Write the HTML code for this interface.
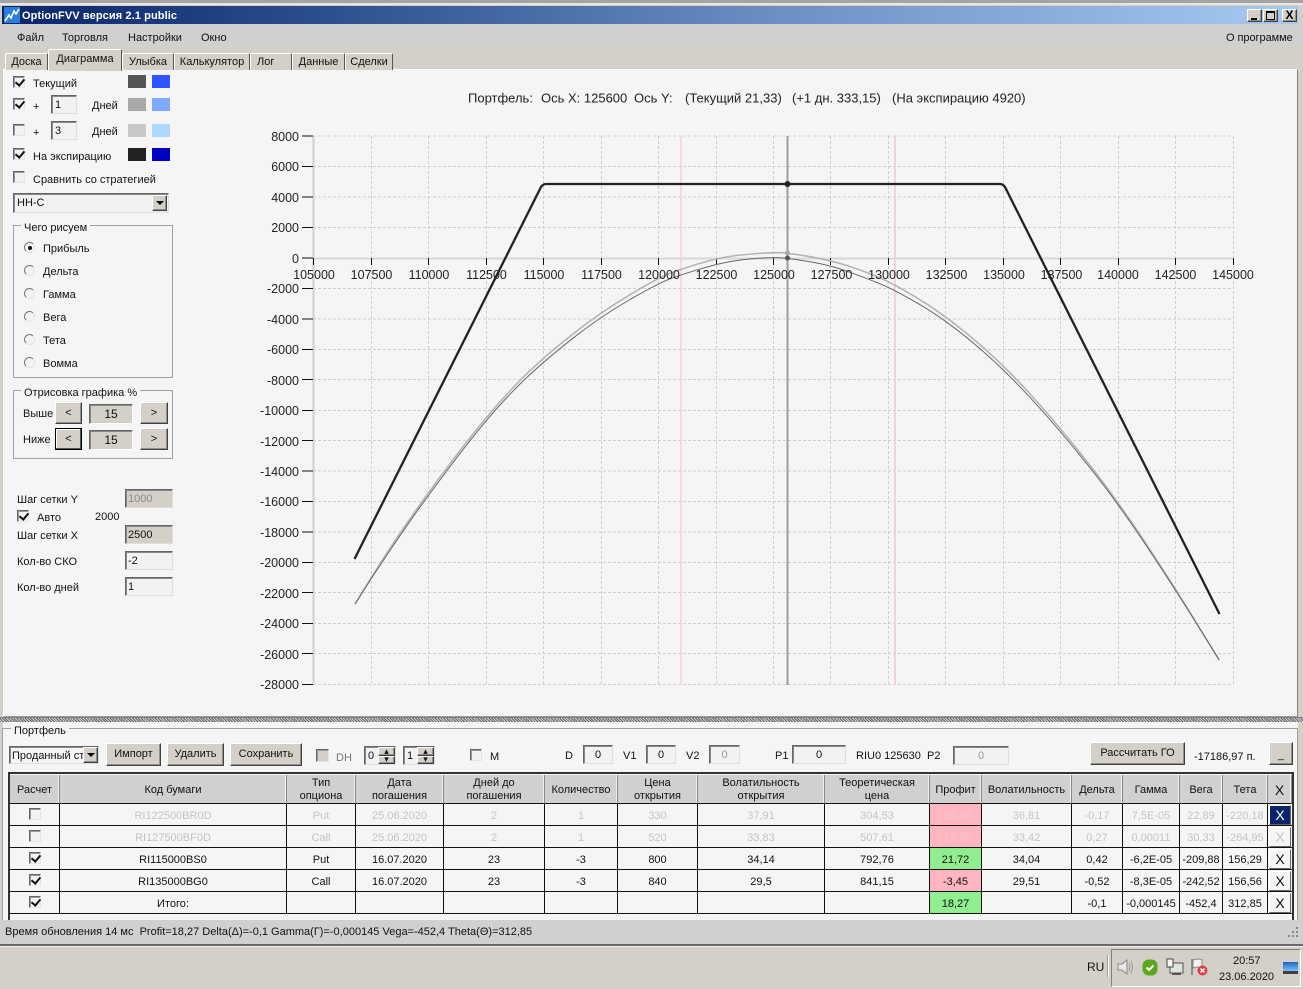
<!DOCTYPE html>
<html lang="ru">
<head>
<meta charset="utf-8">
<title>OptionFVV</title>
<style>
html,body{margin:0;padding:0;width:1303px;height:989px;overflow:hidden;background:#d4d0c8;}
body{position:relative;font:11px/14px "Liberation Sans","DejaVu Sans",sans-serif;color:#111;}
div,span{box-sizing:border-box;}
.a{position:absolute;}
.t{position:absolute;white-space:nowrap;line-height:14px;height:14px;margin-top:1px;}
.cb{position:absolute;width:12px;height:12px;background:#f2f2f2;border:1px solid;border-color:#666 #e4e4e4 #e4e4e4 #666;box-shadow:inset 1px 1px #999;}
.cb.on:after{content:"";position:absolute;left:3px;top:0;width:4px;height:7px;border:solid #111;border-width:0 2px 2px 0;transform:rotate(40deg);}
.sw{position:absolute;width:18px;height:13px;}
.in{position:absolute;background:#f2f2f2;border:1px solid;border-color:#666 #dedede #dedede #666;box-shadow:inset 1px 1px #888;line-height:18px;padding-left:3px;white-space:nowrap;overflow:hidden;}
.in.c{text-align:center;padding-left:0;}
.in.d{background:#d4d0c8;}
.btn{position:absolute;background:#d4d0c8;border:1px solid;border-color:#fff #404040 #404040 #fff;box-shadow:inset -1px -1px #909090;text-align:center;white-space:nowrap;}
.fs{position:absolute;border:1px solid #a0a0a0;}
.lg{position:absolute;background:#f5f5f5;padding:0 3px;line-height:14px;white-space:nowrap;margin-top:1px;}
.rd{position:absolute;width:11px;height:11px;border-radius:50%;background:#f4f4f4;border:1px solid;border-color:#777 #e4e4e4 #e4e4e4 #777;}
.rd.on:after{content:"";position:absolute;left:3px;top:3px;width:4px;height:4px;border-radius:50%;background:#111;}
.tab{position:absolute;top:53px;height:17px;background:#d4d0c8;border:1px solid;border-color:#fff #555 transparent #fff;border-bottom:0;border-radius:2px 2px 0 0;text-align:center;line-height:15px;white-space:nowrap;}
table{position:absolute;left:10px;top:775px;width:1282px;border-collapse:separate;border-spacing:0;table-layout:fixed;}
td{padding:4px 0 0;height:22px;text-align:center;border-right:1px solid #111;border-bottom:1px solid #111;background:#f5f5f5;white-space:nowrap;overflow:hidden;position:relative;line-height:13px;box-sizing:border-box;}
tr.h td{height:29px;padding-top:2px;background:#d0d0d0;border-right:1px solid #888;box-shadow:inset -1px 0 #f0f0f0;border-bottom:1px solid #111;}
tr.g td{color:#c4c4c4;}
td:last-child{border-right:0;}
td.p{background:#ffb6c1;}
td.n{background:#90ee90;}
td .cb{left:19px;top:4px;}
td .x{position:absolute;left:1px;top:1px;width:22px;height:20px;background:#f5f5f5;border:1px solid;border-color:#fff #666 #666 #fff;line-height:18px;font-size:14px;}
svg{position:absolute;overflow:visible;}
</style>
</head>
<body>
<!-- top strip -->
<div class="a" style="left:0;top:0;width:1303px;height:3px;background:#a4a4a4"></div>
<div class="a" style="left:0;top:3px;width:1303px;height:2px;background:#e8e6e0"></div>
<!-- title bar -->
<div class="a" style="left:2px;top:6px;width:1296px;height:18px;background:linear-gradient(90deg,#0a246a 0%,#2c4f8f 25%,#6c90c4 60%,#a6caf0 100%)"></div>
<svg style="left:4px;top:7px" width="16" height="16" viewBox="0 0 16 16"><rect width="16" height="16" fill="#2a7fd8"/><path d="M1 14 L5 8 L7 11 L10 4 L12 7 L15 2" fill="none" stroke="#fff" stroke-width="1.6"/></svg>
<div class="t" style="left:22px;top:8px;color:#fff;font-weight:bold;letter-spacing:.1px">OptionFVV версия 2.1 public</div>
<div class="btn" style="left:1247px;top:9px;width:15px;height:13px"><span class="a" style="left:3px;top:8px;width:6px;height:2px;background:#000"></span></div>
<div class="btn" style="left:1263px;top:9px;width:15px;height:13px"><span class="a" style="left:2px;top:1px;width:9px;height:9px;border:1px solid #000;border-top-width:2px"></span></div>
<div class="btn" style="left:1282px;top:9px;width:15px;height:13px;font-weight:bold;line-height:11px;font-size:12px;color:#000">X</div>
<!-- menu -->
<div class="a" style="left:0;top:24px;width:1303px;height:26px;background:linear-gradient(180deg,#d0d0d0 70%,#d4d0c8)"></div>
<div class="t" style="left:17px;top:30px">Файл</div>
<div class="t" style="left:62px;top:30px">Торговля</div>
<div class="t" style="left:128px;top:30px">Настройки</div>
<div class="t" style="left:201px;top:30px">Окно</div>
<div class="t" style="left:1226px;top:30px;letter-spacing:-.05px">О программе</div>
<!-- panel -->
<div class="a" style="left:3px;top:69px;width:1295px;height:648px;background:#f5f5f5;border:1px solid;border-color:#fff #808080 #999 #fff;box-shadow:inset 1px 0 #f5f5f5"></div>
<!-- tabs -->
<div class="tab" style="left:5px;width:43px;padding-top:1px">Доска</div>
<div class="tab" style="left:122px;width:52px;padding-top:1px">Улыбка</div>
<div class="tab" style="left:174px;width:76px;padding-top:1px">Калькулятор</div>
<div class="tab" style="left:250px;width:42px;padding-top:1px;text-align:left;padding-left:6px">Лог</div>
<div class="tab" style="left:292px;width:53px;padding-top:1px">Данные</div>
<div class="tab" style="left:345px;width:48px;padding-top:1px">Сделки</div>
<div class="tab" style="left:48px;top:49px;width:74px;height:22px;background:#d4d0c8;line-height:18px;border-bottom:0">Диаграмма</div>

<!-- left panel -->
<div class="cb on" style="left:13px;top:76px"></div><div class="t" style="left:33px;top:76px">Текущий</div>
<div class="sw" style="left:128px;top:75px;background:#555"></div><div class="sw" style="left:152px;top:75px;background:#2e55ff"></div>
<div class="cb on" style="left:13px;top:98px"></div><div class="t" style="left:33px;top:99px">+</div>
<div class="in" style="left:51px;top:95px;width:26px;height:19px">1</div><div class="t" style="left:92px;top:98px">Дней</div>
<div class="sw" style="left:128px;top:98px;background:#a8a8a8"></div><div class="sw" style="left:152px;top:98px;background:#7fa8ff"></div>
<div class="cb" style="left:13px;top:124px"></div><div class="t" style="left:33px;top:125px">+</div>
<div class="in" style="left:51px;top:121px;width:26px;height:19px">3</div><div class="t" style="left:92px;top:124px">Дней</div>
<div class="sw" style="left:128px;top:124px;background:#c8c8c8"></div><div class="sw" style="left:152px;top:124px;background:#acd8ff"></div>
<div class="cb on" style="left:13px;top:148px"></div><div class="t" style="left:33px;top:149px">На экспирацию</div>
<div class="sw" style="left:128px;top:148px;background:#222"></div><div class="sw" style="left:152px;top:148px;background:#0000c0"></div>
<div class="cb" style="left:13px;top:171px"></div><div class="t" style="left:33px;top:172px">Сравнить со стратегией</div>
<div class="in" style="left:13px;top:193px;width:156px;height:20px">НН-С</div>
<div class="btn" style="left:152px;top:195px;width:15px;height:16px"><span class="a" style="left:3px;top:5px;border:4px solid transparent;border-top:4px solid #000;border-bottom:0"></span></div>

<div class="fs" style="left:13px;top:225px;width:160px;height:153px"></div>
<div class="lg" style="left:21px;top:220px">Чего рисуем</div>
<div class="rd on" style="left:24px;top:242px"></div><div class="t" style="left:43px;top:241px">Прибыль</div>
<div class="rd" style="left:24px;top:265px"></div><div class="t" style="left:43px;top:264px">Дельта</div>
<div class="rd" style="left:24px;top:288px"></div><div class="t" style="left:43px;top:287px">Гамма</div>
<div class="rd" style="left:24px;top:311px"></div><div class="t" style="left:43px;top:310px">Вега</div>
<div class="rd" style="left:24px;top:334px"></div><div class="t" style="left:43px;top:333px">Тета</div>
<div class="rd" style="left:24px;top:357px"></div><div class="t" style="left:43px;top:356px">Вомма</div>

<div class="fs" style="left:13px;top:390px;width:160px;height:69px"></div>
<div class="lg" style="left:21px;top:385px">Отрисовка графика %</div>
<div class="t" style="left:23px;top:406px">Выше</div>
<div class="btn" style="left:55px;top:402px;width:27px;height:22px;line-height:20px">&lt;</div>
<div class="in d c" style="left:89px;top:404px;width:44px;height:20px;border-color:#666 #fff #fff #666;font-size:12px">15</div>
<div class="btn" style="left:140px;top:402px;width:28px;height:22px;line-height:20px">&gt;</div>
<div class="t" style="left:23px;top:432px">Ниже</div>
<div class="btn" style="left:55px;top:428px;width:27px;height:22px;line-height:20px;border:1px solid #000;box-shadow:inset -1px -1px #555,inset 1px 1px #fff">&lt;</div>
<div class="in d c" style="left:89px;top:430px;width:44px;height:20px;border-color:#666 #fff #fff #666;font-size:12px">15</div>
<div class="btn" style="left:140px;top:428px;width:28px;height:22px;line-height:20px">&gt;</div>

<div class="t" style="left:17px;top:492px">Шаг сетки Y</div>
<div class="in d" style="left:125px;top:489px;width:48px;height:19px;color:#888;padding-left:2px">1000</div>
<div class="cb on" style="left:17px;top:510px"></div><div class="t" style="left:37px;top:510px">Авто</div>
<div class="t" style="left:95px;top:509px">2000</div>
<div class="t" style="left:17px;top:528px">Шаг сетки X</div>
<div class="in d" style="left:125px;top:525px;width:48px;height:19px;padding-left:2px">2500</div>
<div class="t" style="left:17px;top:554px">Кол-во СКО</div>
<div class="in" style="left:125px;top:551px;width:48px;height:19px;padding-left:2px">-2</div>
<div class="t" style="left:17px;top:580px">Кол-во дней</div>
<div class="in" style="left:125px;top:577px;width:48px;height:19px;padding-left:2px">1</div>

<!-- chart -->
<svg style="left:0;top:0" width="1303" height="720" viewBox="0 0 1303 720">
<g fill="none" stroke="#cfcfcf" stroke-width="1" stroke-dasharray="3 2">
<path d="M313 136H1233M313 166.5H1233M313 197H1233M313 227.5H1233M313 288.5H1233M313 319H1233M313 349.5H1233M313 379.5H1233M313 410.5H1233M313 440.5H1233M313 471H1233M313 501.5H1233M313 532H1233M313 562.5H1233M313 592.5H1233M313 623.5H1233M313 653.5H1233M313 684.5H1233"/>
<path d="M371.5 136V685M428.5 136V685M486.5 136V685M543.5 136V685M601.5 136V685M658.5 136V685M716.5 136V685M773.5 136V685M830.5 136V685M888.5 136V685M945.5 136V685M1003.5 136V685M1060.5 136V685M1118.5 136V685M1175.5 136V685M1233.5 136V685"/>
</g>
<path d="M313.5 136V685" stroke="#cfcfcf" stroke-width="2" fill="none"/>
<path d="M313 258.5H1233" stroke="#d8d8d8" stroke-width="2" fill="none"/>
<path d="M681 136V685" stroke="#f8ccd4" stroke-width="1.3" fill="none"/>
<path d="M895 136V685" stroke="#f8d0d8" stroke-width="2" fill="none"/>
<path d="M787.5 136V685" stroke="#9a9caa" stroke-width="2" fill="none"/>
<path d="M302 136H313M302 166.5H313M302 197H313M302 227.5H313M302 258H313M302 288.5H313M302 319H313M302 349.5H313M302 379.5H313M302 410.5H313M302 440.5H313M302 471H313M302 501.5H313M302 532H313M302 562.5H313M302 592.5H313M302 623.5H313M302 653.5H313M302 684.5H313" stroke="#111" stroke-width="1" fill="none"/>
<path d="M313.5 258V265M371.5 258V265M428.5 258V265M486.5 258V265M543.5 258V265M601.5 258V265M658.5 258V265M716.5 258V265M773.5 258V265M830.5 258V265M888.5 258V265M945.5 258V265M1003.5 258V265M1060.5 258V265M1118.5 258V265M1175.5 258V265M1233.5 258V265" stroke="#111" stroke-width="1" fill="none"/>
<path d="M355 604 L369 581.3 Q383 558.5 403 529 Q423 499.5 446.5 468.3 Q470 437 488.4 415.3 Q506.7 393.5 524.9 375.6 Q543 357.7 571.5 335.1 Q600 312.5 629 295.3 Q658 278 669 273.8 Q680 269.5 697.9 264 Q715.7 258.5 729.4 256.5 Q743 254.5 758 253.5 Q773 252.5 780 252.7 Q787 252.8 808.5 256.4 Q830 260 848.4 266 Q866.7 272 880.9 278.3 Q895 284.5 920 299.8 Q945 315 974 339.5 Q1003 364 1031.5 395.5 Q1060 427 1089 464 Q1118 501 1146.9 545 Q1175.7 589 1197.4 624.5 L1219 660" fill="none" stroke="#b4b4b4" stroke-width="1.6"/>
<path d="M355 604 L369.1 582 Q383.3 560 403.3 530.9 Q423.3 501.7 446.7 470.9 Q470 440 488.3 418.3 Q506.7 396.7 525 379.2 Q543.3 361.7 571.7 339.2 Q600 316.7 629.2 300 Q658.3 283.3 669.2 279.2 Q680 275 697.9 269.7 Q715.7 264.3 729.4 261.8 Q743 259.3 758.2 258.3 Q773.3 257.3 780.3 257.7 Q787.3 258 808.7 261.5 Q830 265 848.4 271.7 Q866.7 278.3 880.9 284.2 Q895 290 920 304.7 Q945 319.3 974.2 343.8 Q1003.3 368.3 1031.7 399.2 Q1060 430 1089.2 466.7 Q1118.3 503.3 1147 546.7 Q1175.7 590 1197.5 625 L1219.3 660" fill="none" stroke="#666" stroke-width="1"/>
<path d="M354.5 559 L541 187 Q543 184 546 184 L1000 184 Q1003 184 1005 187 L1219.5 614" fill="none" stroke="#222" stroke-width="2.3"/>
<circle cx="787.5" cy="184" r="3" fill="#222"/>
<circle cx="787.5" cy="253" r="2.5" fill="#a8a8a8"/>
<circle cx="787.5" cy="258" r="2.5" fill="#555"/>
<g font-family="'Liberation Sans',sans-serif" font-size="12.5" fill="#222" text-anchor="end">
<text x="299" y="141">8000</text><text x="299" y="171">6000</text><text x="299" y="202">4000</text><text x="299" y="232">2000</text><text x="299" y="263">0</text><text x="299" y="293">-2000</text><text x="299" y="324">-4000</text><text x="299" y="354">-6000</text><text x="299" y="385">-8000</text><text x="299" y="415">-10000</text><text x="299" y="446">-12000</text><text x="299" y="476">-14000</text><text x="299" y="506">-16000</text><text x="299" y="537">-18000</text><text x="299" y="567">-20000</text><text x="299" y="598">-22000</text><text x="299" y="628">-24000</text><text x="299" y="659">-26000</text><text x="299" y="689">-28000</text>
</g>
<g font-family="'Liberation Sans',sans-serif" font-size="12.5" fill="#222" text-anchor="middle">
<text x="314" y="279">105000</text><text x="371.5" y="279">107500</text><text x="429" y="279">110000</text><text x="486.5" y="279">112500</text><text x="544" y="279">115000</text><text x="601.5" y="279">117500</text><text x="659" y="279">120000</text><text x="716.5" y="279">122500</text><text x="774" y="279">125000</text><text x="831.5" y="279">127500</text><text x="889" y="279">130000</text><text x="946.5" y="279">132500</text><text x="1004" y="279">135000</text><text x="1061.5" y="279">137500</text><text x="1118" y="279">140000</text><text x="1175.5" y="279">142500</text><text x="1233" y="279">145000</text>
</g>
<g font-family="'Liberation Sans',sans-serif" font-size="13" fill="#222">
<text x="468" y="102.5">Портфель:</text><text x="541" y="102.5">Ось X: 125600</text><text x="634" y="102.5">Ось Y:</text><text x="685" y="102.5">(Текущий 21,33)</text><text x="792" y="102.5">(+1 дн. 333,15)</text><text x="892" y="102.5">(На экспирацию 4920)</text>
</g>
</svg>

<!-- splitter -->
<div class="a" style="left:0;top:717px;width:1303px;height:1px;background:#808080"></div>
<div class="a" style="left:0;top:718px;width:1303px;height:4px;background:repeating-linear-gradient(45deg,#666 0 1px,#d0d0d0 1px 2px)"></div>

<!-- portfolio -->
<div class="a" style="left:0;top:722px;width:1303px;height:198px;background:#d4d0c8"></div>
<div class="a" style="left:3px;top:722px;width:1295px;height:198px;background:#f5f5f5"></div>
<div class="a" style="left:2px;top:728px;width:1296px;height:192px;border:1px solid #a0a0a0;border-bottom:0"></div>
<div class="lg" style="left:11px;top:723px">Портфель</div>
<div class="in" style="left:9px;top:746px;width:90px;height:18px;padding-left:2px;line-height:18px;background:#f5f5f5">Проданный ст</div>
<div class="btn" style="left:83px;top:747px;width:15px;height:16px"><span class="a" style="left:3px;top:5px;border:4px solid transparent;border-top:4px solid #000;border-bottom:0"></span></div>
<div class="btn" style="left:106px;top:743px;width:55px;height:23px;line-height:21px">Импорт</div>
<div class="btn" style="left:167px;top:743px;width:57px;height:23px;line-height:21px">Удалить</div>
<div class="btn" style="left:230px;top:743px;width:72px;height:23px;line-height:21px">Сохранить</div>
<div class="cb" style="left:316px;top:749px;width:13px;height:13px;background:#d4d0c8"></div>
<div class="t" style="left:336px;top:750px;color:#777">DH</div>
<div class="in" style="left:364px;top:746px;width:32px;height:19px">0</div>
<div class="btn" style="left:378px;top:747px;width:17px;height:9px;line-height:6px;font-size:9px">▴</div>
<div class="btn" style="left:378px;top:756px;width:17px;height:8px;line-height:5px;font-size:9px">▾</div>
<div class="in" style="left:403px;top:746px;width:32px;height:19px">1</div>
<div class="btn" style="left:417px;top:747px;width:17px;height:9px;line-height:6px;font-size:9px">▴</div>
<div class="btn" style="left:417px;top:756px;width:17px;height:8px;line-height:5px;font-size:9px">▾</div>
<div class="cb" style="left:470px;top:749px"></div>
<div class="t" style="left:490px;top:749px">M</div>
<div class="t" style="left:565px;top:748px">D</div>
<div class="in c" style="left:583px;top:745px;width:30px;height:19px">0</div>
<div class="t" style="left:623px;top:748px">V1</div>
<div class="in c" style="left:646px;top:745px;width:30px;height:19px">0</div>
<div class="t" style="left:686px;top:748px">V2</div>
<div class="in c" style="left:709px;top:745px;width:31px;height:19px;color:#999">0</div>
<div class="t" style="left:775px;top:748px">P1</div>
<div class="in c" style="left:792px;top:745px;width:54px;height:19px">0</div>
<div class="t" style="left:856px;top:748px">RIU0 125630</div>
<div class="t" style="left:927px;top:748px">P2</div>
<div class="in c" style="left:953px;top:746px;width:56px;height:19px;color:#999">0</div>
<div class="btn" style="left:1090px;top:742px;width:95px;height:23px;line-height:21px">Рассчитать ГО</div>
<div class="t" style="left:1194px;top:749px">-17186,97 п.</div>
<div class="btn" style="left:1269px;top:742px;width:24px;height:23px;line-height:24px">_</div>

<!-- table frame -->
<div class="a" style="left:8px;top:772px;width:1286px;height:148px;border:solid #333;border-width:2px 2px 0 2px"></div>
<table>
<colgroup><col style="width:50px"><col style="width:227px"><col style="width:69px"><col style="width:88px"><col style="width:101px"><col style="width:73px"><col style="width:80px"><col style="width:127px"><col style="width:105px"><col style="width:52px"><col style="width:90px"><col style="width:51px"><col style="width:57px"><col style="width:43px"><col style="width:45px"><col style="width:24px"></colgroup>
<tr class="h"><td>Расчет</td><td>Код бумаги</td><td>Тип<br>опциона</td><td>Дата<br>погашения</td><td>Дней до<br>погашения</td><td>Количество</td><td>Цена<br>открытия</td><td>Волатильность<br>открытия</td><td>Теоретическая<br>цена</td><td>Профит</td><td>Волатильность</td><td>Дельта</td><td>Гамма</td><td>Вега</td><td>Тета</td><td style="font-size:14px">X</td></tr>
<tr class="g"><td><div class="cb"></div></td><td>RI122500BR0D</td><td>Put</td><td>25.06.2020</td><td>2</td><td>1</td><td>330</td><td>37,91</td><td>304,53</td><td class="p" style="color:#f4c8d0">-25,47</td><td>36,81</td><td>-0,17</td><td>7,5E-05</td><td>22,89</td><td>-220,18</td><td><div class="x" style="background:#0a246a;color:#fff">X</div></td></tr>
<tr class="g"><td><div class="cb"></div></td><td>RI127500BF0D</td><td>Call</td><td>25.06.2020</td><td>2</td><td>1</td><td>520</td><td>33,83</td><td>507,61</td><td class="p" style="color:#f4c8d0">-12,39</td><td>33,42</td><td>0,27</td><td>0,00011</td><td>30,33</td><td>-264,95</td><td><div class="x">X</div></td></tr>
<tr><td><div class="cb on"></div></td><td>RI115000BS0</td><td>Put</td><td>16.07.2020</td><td>23</td><td>-3</td><td>800</td><td>34,14</td><td>792,76</td><td class="n">21,72</td><td>34,04</td><td>0,42</td><td>-6,2E-05</td><td>-209,88</td><td>156,29</td><td><div class="x">X</div></td></tr>
<tr><td><div class="cb on"></div></td><td>RI135000BG0</td><td>Call</td><td>16.07.2020</td><td>23</td><td>-3</td><td>840</td><td>29,5</td><td>841,15</td><td class="p">-3,45</td><td>29,51</td><td>-0,52</td><td>-8,3E-05</td><td>-242,52</td><td>156,56</td><td><div class="x">X</div></td></tr>
<tr><td><div class="cb on"></div></td><td>Итого:</td><td></td><td></td><td></td><td></td><td></td><td></td><td></td><td class="n">18,27</td><td></td><td>-0,1</td><td>-0,000145</td><td>-452,4</td><td>312,85</td><td><div class="x">X</div></td></tr>
</table>

<!-- status -->
<div class="a" style="left:0;top:920px;width:1303px;height:24px;background:#d0d0d0"></div>
<div class="a" style="left:0;top:944px;width:1303px;height:2px;background:#6a6a6a"></div>
<div class="a" style="left:0;top:946px;width:1303px;height:1px;background:#f0f0f0"></div>
<div class="t" style="left:5px;top:924px">Время обновления 14 мс &nbsp;Profit=18,27 Delta(Δ)=-0,1 Gamma(Г)=-0,000145 Vega=-452,4 Theta(Θ)=312,85</div>
<svg style="left:1286px;top:926px" width="13" height="13" viewBox="0 0 13 13"><path d="M10 1h2v2h-2zM6 5h2v2H6zM10 5h2v2h-2zM2 9h2v2H2zM6 9h2v2H6zM10 9h2v2h-2z" fill="#888"/></svg>

<!-- taskbar -->
<div class="t" style="left:1087px;top:959px;font-size:12px">RU</div>
<div class="a" style="left:1107px;top:955px;width:2px;height:22px;background:#a0a0a0;border-right:1px solid #fff"></div>
<div class="a" style="left:1111px;top:949px;width:190px;height:38px;border:1px solid;border-color:#808080 #fff #fff #808080"></div>
<svg style="left:1117px;top:958px" width="18" height="18" viewBox="0 0 18 18"><path d="M1 6h4l5-4v14l-5-4H1z" fill="#e8e8e8" stroke="#888"/><path d="M12 5q2 4 0 8M14 3q3 6 0 12" fill="none" stroke="#999"/></svg>
<svg style="left:1142px;top:959px" width="16" height="17" viewBox="0 0 16 17"><rect x="0.5" y="0.5" width="15" height="16" rx="6" fill="#5aa820"/><path d="M4.5 8.5l2.5 2.5 4.5-4.5" fill="none" stroke="#fff" stroke-width="2"/></svg>
<svg style="left:1166px;top:958px" width="18" height="18" viewBox="0 0 18 18"><rect x="4" y="5" width="13" height="10" fill="#dfe4dc" stroke="#555"/><rect x="1" y="1" width="6" height="8" fill="#f6f6f6" stroke="#444"/><path d="M6 16h9" stroke="#555" stroke-width="2"/></svg>
<svg style="left:1190px;top:958px" width="18" height="18" viewBox="0 0 18 18"><path d="M2 1v16" stroke="#777" stroke-width="1.5"/><path d="M3 2q5-2 9 0v8q-4-2-9 0z" fill="#f2f2f2" stroke="#888"/><circle cx="12.5" cy="12.5" r="5" fill="#e04040"/><path d="M10.5 10.5l4 4M14.5 10.5l-4 4" stroke="#fff" stroke-width="1.4"/></svg>
<div class="t" style="left:1233px;top:953px;font-size:11px">20:57</div>
<div class="t" style="left:1219px;top:969px;font-size:11px">23.06.2020</div>
<div class="a" style="left:1283px;top:962px;width:15px;height:12px;background:linear-gradient(180deg,#1e64c8,#7cc0f4 75%,#404040 76%)"></div>
</body>
</html>
